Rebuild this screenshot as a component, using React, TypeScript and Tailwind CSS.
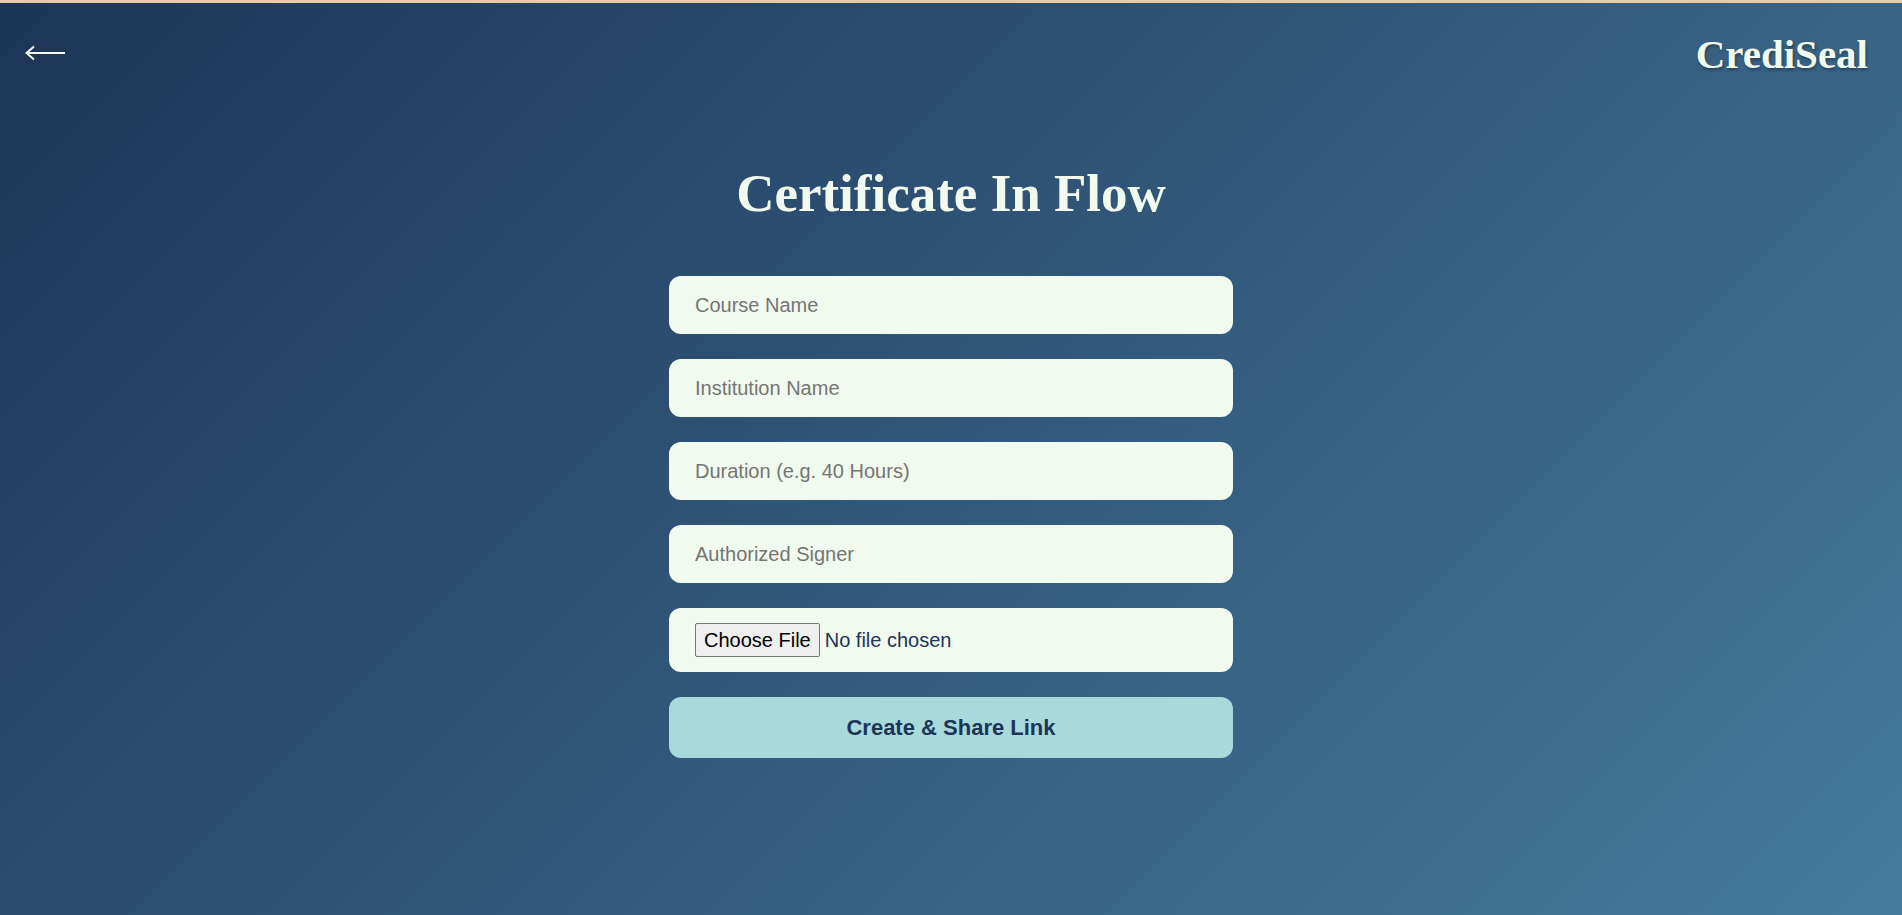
import { useState } from 'react';

const fields = [
  { name: 'course', placeholder: 'Course Name' },
  { name: 'institution', placeholder: 'Institution Name' },
  { name: 'duration', placeholder: 'Duration (e.g. 40 Hours)' },
  { name: 'signer', placeholder: 'Authorized Signer' },
];

const BackArrow = () => (
  <svg width="41" height="16" viewBox="0 0 41 16" fill="none">
    <path d="M2 8 H40" stroke="#f1faee" strokeWidth="2" />
    <path d="M9 1.5 L1.5 8 L9 14.5" stroke="#f1faee" strokeWidth="2" strokeLinejoin="miter" />
  </svg>
);

const App = () => {
  const [values, setValues] = useState<Record<string, string>>({});

  return (
    <div className="min-h-screen border-t-[3px] border-[#eccaa0] bg-[linear-gradient(135deg,#1d3557,#457b9d)] font-['Liberation_Sans',Arial,sans-serif]">
      <header className="flex items-start justify-between pl-[25px] pr-[34px] pt-[31px]">
        <button className="mt-[11px] cursor-pointer" aria-label="Back">
          <BackArrow />
        </button>
        <div className="font-['Liberation_Serif',serif] text-[41px] font-bold leading-none text-[#f1faee] [text-shadow:1px_2px_3px_rgba(0,0,0,0.35)]">
          CrediSeal
        </div>
      </header>

      <main className="flex flex-col items-center">
        <h1 className="mt-[92px] font-['Liberation_Serif',serif] text-[53px] font-bold leading-none text-[#f1faee]">
          Certificate In Flow
        </h1>

        <form
          className="mt-[56px] flex w-[564px] flex-col gap-[25px]"
          onSubmit={(e) => e.preventDefault()}
        >
          {fields.map((f) => (
            <input
              key={f.name}
              type="text"
              placeholder={f.placeholder}
              value={values[f.name] || ''}
              onChange={(e) => setValues({ ...values, [f.name]: e.target.value })}
              className="h-[58px] w-full rounded-xl bg-[#f1faee] px-[26px] text-[20px] text-[#1d3557] outline-none placeholder:text-[#757575]"
            />
          ))}

          <div className="flex h-[64px] items-center rounded-xl bg-[#f1faee] px-[26px]">
            <input
              type="file"
              className="text-[20px] text-[#1d3557] file:mr-[5px] file:rounded-[2px] file:border file:border-[#767676] file:bg-[#efefef] file:px-[8px] file:py-[1px] file:text-black"
            />
          </div>

          <button
            type="submit"
            className="h-[61px] w-full cursor-pointer rounded-xl bg-[#a8dadc] text-[22px] font-bold text-[#1d3557]"
          >
            Create &amp; Share Link
          </button>
        </form>
      </main>
    </div>
  );
};

export default App;
